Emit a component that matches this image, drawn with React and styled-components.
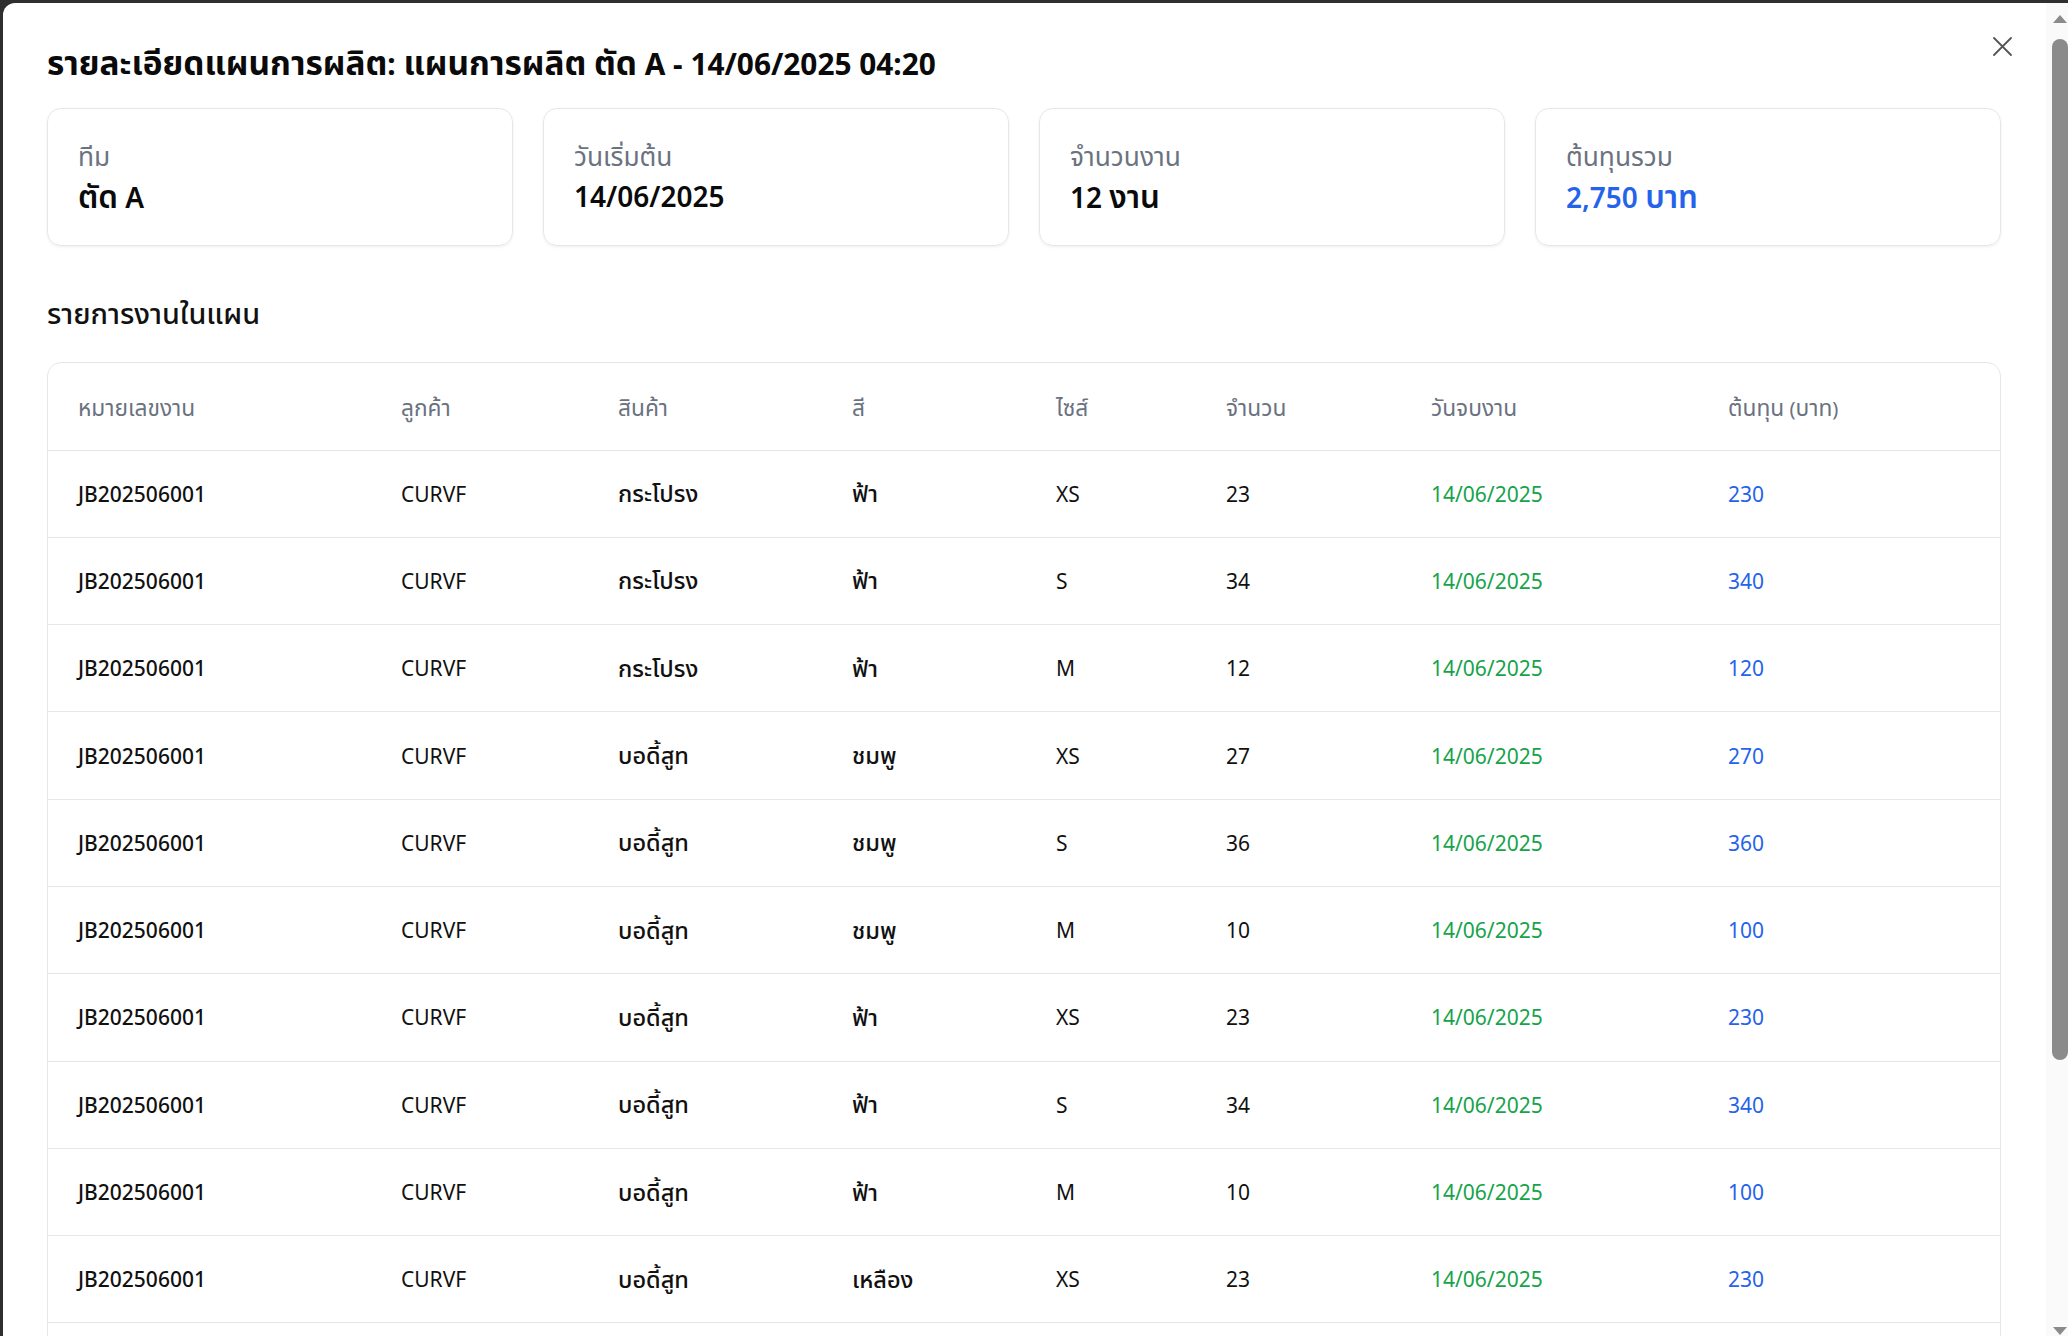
import React from "react";
import styled, { createGlobalStyle } from "styled-components";

const GlobalStyle = createGlobalStyle`
  html, body {
    margin: 0;
    padding: 0;
    height: 100%;
    overflow: hidden;
    background: #2f2f2f;
    font-family: "Noto Sans", "Noto Sans Thai", "Leelawadee UI", sans-serif;
    color: #111;
  }
  * {
    box-sizing: border-box;
  }
`;

const Overlay = styled.div`
  height: 100vh;
  padding: 3px 0 0 3px;
`;

const Modal = styled.div`
  display: flex;
  height: calc(100vh - 3px);
  background: #ffffff;
  border-top-left-radius: 12px;
  overflow: hidden;
`;

const ModalBody = styled.div`
  position: relative;
  flex: 1;
  min-width: 0;
  overflow: hidden;
`;

const ScrollRail = styled.div`
  width: 22px;
  flex: none;
  display: flex;
  flex-direction: column;
  background: #fafafa;
`;

const RailArrow = styled.div`
  height: 36px;
  display: flex;
  justify-content: center;
  align-items: ${(p) => (p.$down ? "flex-end" : "flex-start")};
  padding: ${(p) => (p.$down ? "0 0 1px 6px" : "12px 0 0 6px")};

  &::before {
    content: "";
    width: 0;
    height: 0;
    border-left: 7px solid transparent;
    border-right: 7px solid transparent;
    ${(p) =>
      p.$down ? "border-top: 8px solid #8b8b8b;" : "border-bottom: 8px solid #8b8b8b;"}
  }
`;

const RailThumb = styled.div`
  height: 1021px;
  margin-left: 6px;
  background: #8b8b8b;
  border-radius: 8px;
`;

const RailSpacer = styled.div`
  flex: 1;
`;

const Content = styled.div`
  padding: 39px 45px 44px 44px;
`;

const CloseButton = styled.button`
  position: absolute;
  top: 34px;
  right: 34px;
  width: 19px;
  height: 19px;
  padding: 0;
  border: none;
  background: none;
  color: #555;
  cursor: pointer;
  display: flex;
`;

const ThaiRun = styled.span`
  font-size: 1.12em;
`;

const Title = styled.h2`
  margin: 0;
  font-size: 29.8px;
  line-height: 40px;
  font-weight: 700;
  color: #0a0a0a;
`;

const StatGrid = styled.div`
  display: grid;
  grid-template-columns: repeat(4, 1fr);
  gap: 30px;
  margin-top: 24px;
`;

const StatCard = styled.div`
  border: 1px solid #e5e7eb;
  border-radius: 14px;
  box-shadow: 0 1px 3px rgba(0, 0, 0, 0.07);
  padding: 30px 30px 0;
  height: 138px;
`;

const StatLabel = styled.div`
  font-size: 23.5px;
  line-height: 34px;
  color: #6b7280;
`;

const StatValue = styled.div`
  margin-top: 2px;
  font-size: 28px;
  line-height: 40px;
  font-weight: 600;
  color: ${(p) => (p.$accent ? "#2563eb" : "#0a0a0a")};
`;

const SectionTitle = styled.h3`
  margin: 47px 0 0;
  font-size: 25.7px;
  line-height: 40px;
  font-weight: 500;
  color: #111;
`;

const TableCard = styled.div`
  margin-top: 27px;
  border: 1px solid #e5e7eb;
  border-radius: 14px;
  overflow: hidden;
`;

const Table = styled.table`
  width: 100%;
  border-collapse: collapse;
  table-layout: fixed;
`;

const HeadCell = styled.th`
  height: 87px;
  padding: 4px 30px 0;
  text-align: left;
  font-size: 20.3px;
  line-height: 30px;
  font-weight: 400;
  color: #6b7280;
  border-bottom: 1px solid #e5e7eb;
`;

const Row = styled.tr`
  height: 87.3px;
  border-bottom: 1px solid #e5e7eb;
`;

const Cell = styled.td`
  padding: 0 30px;
  font-size: 21px;
  line-height: 30px;
  font-weight: ${(p) => (p.$strong ? 500 : 400)};
  color: ${(p) =>
    p.$tone === "green" ? "#16a34a" : p.$tone === "blue" ? "#2563eb" : "#111"};
`;

const columns = [
  { label: "หมายเลขงาน", width: 323 },
  { label: "ลูกค้า", width: 217 },
  { label: "สินค้า", width: 234 },
  { label: "สี", width: 204 },
  { label: "ไซส์", width: 170 },
  { label: "จำนวน", width: 205 },
  { label: "วันจบงาน", width: 297 },
  { label: "ต้นทุน (บาท)", width: 304 },
];

const stats = [
  { label: "ทีม", value: "ตัด A" },
  { label: "วันเริ่มต้น", value: "14/06/2025" },
  { label: "จำนวนงาน", value: "12 งาน" },
  { label: "ต้นทุนรวม", value: "2,750 บาท", accent: true },
];

const jobs = [
  ["กระโปรง", "ฟ้า", "XS", 23, 230],
  ["กระโปรง", "ฟ้า", "S", 34, 340],
  ["กระโปรง", "ฟ้า", "M", 12, 120],
  ["บอดี้สูท", "ชมพู", "XS", 27, 270],
  ["บอดี้สูท", "ชมพู", "S", 36, 360],
  ["บอดี้สูท", "ชมพู", "M", 10, 100],
  ["บอดี้สูท", "ฟ้า", "XS", 23, 230],
  ["บอดี้สูท", "ฟ้า", "S", 34, 340],
  ["บอดี้สูท", "ฟ้า", "M", 10, 100],
  ["บอดี้สูท", "เหลือง", "XS", 23, 230],
  ["บอดี้สูท", "เหลือง", "S", 25, 250],
  ["บอดี้สูท", "เหลือง", "M", 18, 180],
];

// the Thai fallback font runs small next to the Latin one, so Thai runs get bumped up
const Tx = ({ children }) =>
  String(children)
    .split(/([\u0E00-\u0E7F]+)/)
    .map((part, i) =>
      /[\u0E00-\u0E7F]/.test(part) ? <ThaiRun key={i}>{part}</ThaiRun> : part
    );

const CloseIcon = () => (
  <svg width="19" height="19" viewBox="0 0 19 19" fill="none">
    <path d="M1 1L18 18M18 1L1 18" stroke="currentColor" strokeWidth="1.8" strokeLinecap="round" />
  </svg>
);

export default function App() {
  return (
    <>
      <GlobalStyle />
      <Overlay>
        <Modal>
          <ModalBody>
            <CloseButton aria-label="ปิด">
              <CloseIcon />
            </CloseButton>
            <Content>
              <Title>
                <Tx>รายละเอียดแผนการผลิต: แผนการผลิต ตัด A - 14/06/2025 04:20</Tx>
              </Title>

              <StatGrid>
                {stats.map((s) => (
                  <StatCard key={s.label}>
                    <StatLabel>
                      <Tx>{s.label}</Tx>
                    </StatLabel>
                    <StatValue $accent={s.accent}>
                      <Tx>{s.value}</Tx>
                    </StatValue>
                  </StatCard>
                ))}
              </StatGrid>

              <SectionTitle>
                <Tx>รายการงานในแผน</Tx>
              </SectionTitle>

              <TableCard>
                <Table>
                  <colgroup>
                    {columns.map((c) => (
                      <col key={c.label} style={{ width: c.width }} />
                    ))}
                  </colgroup>
                  <thead>
                    <tr>
                      {columns.map((c) => (
                        <HeadCell key={c.label}>
                          <Tx>{c.label}</Tx>
                        </HeadCell>
                      ))}
                    </tr>
                  </thead>
                  <tbody>
                    {jobs.map(([product, color, size, qty, cost], i) => (
                      <Row key={i}>
                        <Cell $strong>JB202506001</Cell>
                        <Cell>CURVF</Cell>
                        <Cell $strong>
                          <Tx>{product}</Tx>
                        </Cell>
                        <Cell $strong>
                          <Tx>{color}</Tx>
                        </Cell>
                        <Cell>{size}</Cell>
                        <Cell>{qty}</Cell>
                        <Cell $tone="green">14/06/2025</Cell>
                        <Cell $tone="blue">{cost}</Cell>
                      </Row>
                    ))}
                  </tbody>
                </Table>
              </TableCard>
            </Content>
          </ModalBody>
          <ScrollRail>
            <RailArrow />
            <RailThumb />
            <RailSpacer />
            <RailArrow $down />
          </ScrollRail>
        </Modal>
      </Overlay>
    </>
  );
}
